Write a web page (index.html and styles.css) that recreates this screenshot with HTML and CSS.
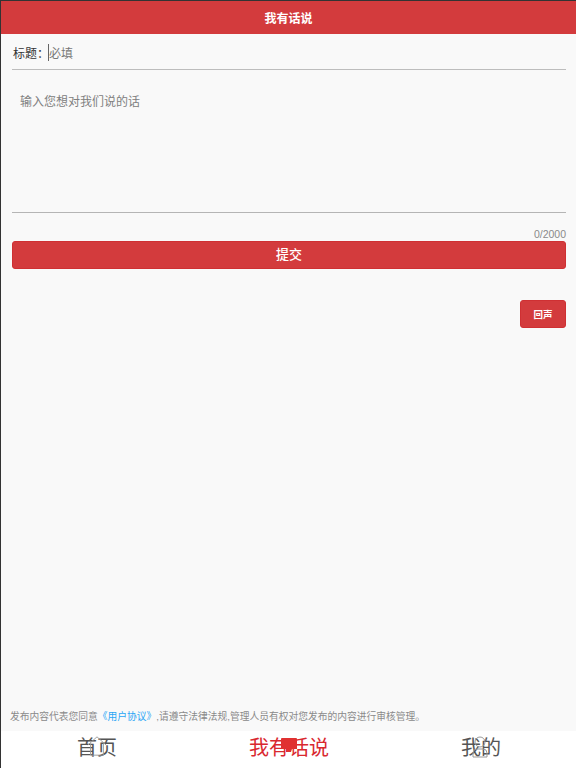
FILE: index.html
```html
<!DOCTYPE html>
<html lang="zh-CN">
<head>
<meta charset="utf-8">
<title>我有话说</title>
<link rel="stylesheet" href="styles.css">
</head>
<body>
<div class="app">
  <header class="header">我有话说</header>
  <main class="main">
    <div class="title-row">
      <span class="title-label">标题：</span>
      <span class="caret"></span>
      <span class="title-placeholder">必填</span>
    </div>
    <div class="message">输入您想对我们说的话</div>
    <div class="count">0/2000</div>
    <button class="submit">提交</button>
    <div class="echo-row"><button class="echo">回声</button></div>
  </main>
  <p class="notice">发布内容代表您同意<a class="agreement">《用户协议》</a>,请遵守法律法规,管理人员有权对您发布的内容进行审核管理。</p>
  <nav class="tabs">
    <div class="tab">
      <svg class="tab-icon icon-home" viewBox="0 0 24 24" fill="none" stroke="#999" stroke-width="1"><path d="M2 11 12 2l10 9M5 9v13h14V9"/></svg>
      <span>首页</span>
    </div>
    <div class="tab active">
      <svg class="tab-icon icon-talk" viewBox="0 0 16 14" fill="#e03131"><path d="M1 0h14a1 1 0 0 1 1 1v10H11l-1 3H5v-3H0V1a1 1 0 0 1 1-1z"/></svg>
      <span>我有话说</span>
    </div>
    <div class="tab">
      <svg class="tab-icon icon-me" viewBox="0 0 16 22" fill="none" stroke="#999" stroke-width="1"><circle cx="8" cy="6" r="5"/><path d="M1 21v-4a4 4 0 0 1 4-4h6a4 4 0 0 1 4 4v4z"/></svg>
      <span>我的</span>
    </div>
  </nav>
</div>
</body>
</html>
```

FILE: styles.css
```css
* { box-sizing: border-box; }
html, body { margin: 0; padding: 0; height: 100%; }
body {
  font-family: "Liberation Sans", "Noto Sans CJK SC", sans-serif;
  background: #f9f9f9;
}
.app {
  height: 768px;
  display: flex;
  flex-direction: column;
  border-top: 1px solid #333;
  border-left: 1px solid #333;
  overflow: hidden;
}
.header {
  height: 33px;
  flex: none;
  background: #d33b3d;
  color: #fff;
  font-size: 12px;
  font-weight: 700;
  display: flex;
  align-items: center;
  justify-content: center;
}
.main {
  flex: 1;
  padding: 0 10px 0 11px;
}
.title-row {
  height: 36px;
  border-bottom: 1px solid #bdbdbd;
  display: flex;
  align-items: center;
  padding: 2px 0 0 1px;
  font-size: 12px;
  color: #333;
  white-space: nowrap;
}
.title-label { width: 35px; flex: none; }
.caret { width: 1px; height: 17px; background: #666; flex: none; }
.title-placeholder { color: #777; }
.message {
  height: 143px;
  border-bottom: 1px solid #b5b5b5;
  padding: 24px 8px 0;
  font-size: 12px;
  line-height: 16px;
  color: #808080;
}
.count {
  height: 28px;
  padding-top: 15px;
  line-height: 12px;
  text-align: right;
  font-size: 10.5px;
  color: #8a8a8a;
}
.submit {
  display: block;
  width: 100%;
  height: 28px;
  padding: 0 0 3px;
  border: 1px solid #cf3033;
  border-radius: 3px;
  background: #d33b3d;
  color: #fff;
  font: inherit;
  font-size: 13px;
  font-weight: 500;
}
.echo-row {
  display: flex;
  justify-content: flex-end;
  margin-top: 31px;
}
.echo {
  width: 46px;
  height: 28px;
  padding: 0;
  border: 1px solid #cf3033;
  border-radius: 3px;
  background: #d33b3d;
  color: #fff;
  font: inherit;
  font-size: 9.5px;
  font-weight: 700;
}
.notice {
  flex: none;
  margin: 0;
  height: 30px;
  padding: 9px 0 0 9px;
  font-size: 9.75px;
  line-height: 14px;
  color: #8a8a8a;
  white-space: nowrap;
}
.agreement { color: #2aa5f5; }
.tabs {
  flex: none;
  height: 37px;
  background: #fff;
  display: flex;
  margin-left: -1px;
  position: relative;
}
.tab {
  flex: 1;
  position: relative;
  display: flex;
  justify-content: center;
  padding: 4px 0 0 2px;
  font-size: 20px;
  line-height: 27px;
  color: #555;
}
.tab.active { color: #d9282f; }
.tab-icon { position: absolute; left: 50%; }
.icon-home { width: 22px; height: 22px; margin-left: -10px; top: 4px; }
.icon-talk { width: 16px; height: 14px; margin-left: -7px; top: 7px; }
.icon-me { width: 16px; height: 22px; margin-left: -8px; top: 5px; }
```
